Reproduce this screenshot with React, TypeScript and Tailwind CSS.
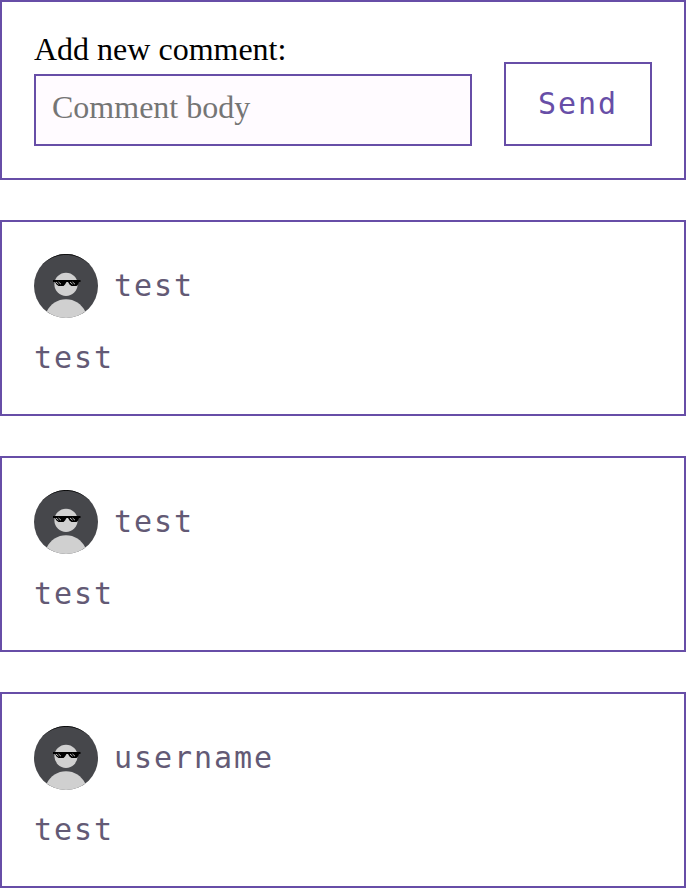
import React from "react";

const comments = [
  { author: "test", body: "test" },
  { author: "test", body: "test" },
  { author: "username", body: "test" },
];

const mono =
  "font-['DejaVu_Sans_Mono',monospace] text-[30px] tracking-[1.94px] leading-[48px]";

function Avatar() {
  return (
    <svg className="size-16 shrink-0" viewBox="0 0 64 64" aria-hidden="true">
      <circle cx="32" cy="32" r="32" fill="#46474b" />
      <path d="M7 12a32 32 0 0 1 50 0A33.5 33.5 0 0 0 7 12z" fill="#000" />
      <circle cx="32" cy="30.3" r="11.6" fill="#d0d0d0" />
      <path
        d="M12.7 57.5C16.5 50 23.5 45.2 32 45.2S47.5 50 51.3 57.5A32 32 0 0 1 12.7 57.5z"
        fill="#d0d0d0"
      />
      <path
        d="M19 26h27.5v2H45l-1 2.5-1.5 1.5h-5l-2-1.5-1.5-2.5h-1.5l-1.5 2.5-1.5 1.5h-5l-2-1.5-1.5-2.5H19z"
        fill="#000"
      />
      <path
        d="M22 28l2.5 2.2M24.5 28l2.5 2.2M36 28l2.5 2.2M38.5 28l2.5 2.2"
        stroke="#bbb"
        strokeWidth="1"
      />
    </svg>
  );
}

export default function App() {
  return (
    <main className="flex w-full flex-col gap-10 bg-white">
      <form
        className="flex h-[180px] items-end gap-8 border-2 border-[#674ea7] p-8"
        onSubmit={(e) => e.preventDefault()}
      >
        <label className="flex min-w-0 flex-1 flex-col gap-[10px] font-['Liberation_Serif',serif] text-[32px] leading-[30px] text-black">
          Add new comment:
          <input
            className="h-[72px] w-full rounded-none border-2 border-[#674ea7] bg-[#fffbff] px-4 pb-[6px] outline-none placeholder:text-[#757575]"
            placeholder="Comment body"
          />
        </label>
        <button
          className={`${mono} h-[84px] w-[148px] shrink-0 border-2 border-[#674ea7] bg-white text-[#674ea7]`}
        >
          Send
        </button>
      </form>
      {comments.map((comment, i) => (
        <article
          key={i}
          className={`${mono} flex flex-col gap-4 border-2 border-[#674ea7] p-8 text-[#635a75]`}
        >
          <header className="flex items-center gap-4">
            <Avatar />
            <span>{comment.author}</span>
          </header>
          <p>{comment.body}</p>
        </article>
      ))}
    </main>
  );
}
